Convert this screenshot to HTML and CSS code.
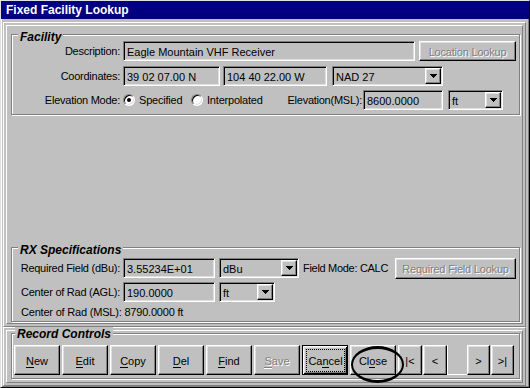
FILE: index.html
```html
<!DOCTYPE html>
<html>
<head>
<meta charset="utf-8">
<title>Fixed Facility Lookup</title>
<link rel="stylesheet" href="styles.css">
</head>
<body>
<div class="window">
  <div class="titlebar">Fixed Facility Lookup</div>
  <div class="client">
    <div class="panel upper">
      <div class="panel-inner">
        <div class="group facility">
          <div class="legend">Facility</div>
          <div class="row">
            <span class="label">Description:</span>
            <div class="field f-desc">Eagle Mountain VHF Receiver</div>
            <div class="btn disabled b-loc">Location Lookup</div>
          </div>
          <div class="row row-gap5">
            <span class="label">Coordinates:</span>
            <div class="field f-lat">39 02 07.00 N</div>
            <div class="field f-lon">104 40 22.00 W</div>
            <div class="select s-datum"><span class="sel-text">NAD 27</span><span class="btn drop"><svg width="7" height="4" viewBox="0 0 7 4" shape-rendering="crispEdges"><path d="M0 0h7v1H0zM1 1h5v1H1zM2 2h3v1H2zM3 3h1v1H3z" fill="#000"/></svg></span></div>
          </div>
          <div class="row row-gap4">
            <span class="label">Elevation Mode:</span>
            <span class="radio checked r1"></span><span class="rlabel rl1">Specified</span>
            <span class="radio r2"></span><span class="rlabel rl2">Interpolated</span>
            <span class="label label2">Elevation(MSL):</span>
            <div class="field f-elev">8600.0000</div>
            <div class="select s-ft1"><span class="sel-text">ft</span><span class="btn drop"><svg width="7" height="4" viewBox="0 0 7 4" shape-rendering="crispEdges"><path d="M0 0h7v1H0zM1 1h5v1H1zM2 2h3v1H2zM3 3h1v1H3z" fill="#000"/></svg></span></div>
          </div>
        </div>

        <div class="group rx">
          <div class="legend">RX Specifications</div>
          <div class="row">
            <span class="label">Required Field (dBu):</span>
            <div class="field f-num">3.55234E+01</div>
            <div class="select s-dbu"><span class="sel-text">dBu</span><span class="btn drop"><svg width="7" height="4" viewBox="0 0 7 4" shape-rendering="crispEdges"><path d="M0 0h7v1H0zM1 1h5v1H1zM2 2h3v1H2zM3 3h1v1H3z" fill="#000"/></svg></span></div>
            <span class="plain mode">Field Mode: CALC</span>
            <div class="btn disabled b-req">Required Field Lookup</div>
          </div>
          <div class="row row-gap4">
            <span class="label">Center of Rad (AGL):</span>
            <div class="field f-num">190.0000</div>
            <div class="select s-ft2"><span class="sel-text">ft</span><span class="btn drop"><svg width="7" height="4" viewBox="0 0 7 4" shape-rendering="crispEdges"><path d="M0 0h7v1H0zM1 1h5v1H1zM2 2h3v1H2zM3 3h1v1H3z" fill="#000"/></svg></span></div>
          </div>
          <div class="msl">Center of Rad (MSL): 8790.0000 ft</div>
        </div>
      </div>
    </div>

    <div class="panel lower">
      <div class="panel-inner">
        <div class="group record">
          <div class="legend">Record Controls</div>
          <div class="btnrow">
            <div class="btn rbtn"><span><u>N</u>ew</span></div>
            <div class="btn rbtn"><span><u>E</u>dit</span></div>
            <div class="btn rbtn"><span><u>C</u>opy</span></div>
            <div class="btn rbtn"><span><u>D</u>el</span></div>
            <div class="btn rbtn"><span><u>F</u>ind</span></div>
            <div class="btn rbtn disabled"><span><u>S</u>ave</span></div>
            <div class="btn rbtn default"><span class="focus"><span>Ca<u>n</u>cel</span></span></div>
            <div class="btn rbtn circled"><span>Cl<u>o</u>se</span></div>
            <div class="btn nav n1"><span>|&lt;</span></div>
            <div class="btn nav n2"><span>&lt;</span></div>
            <div class="navgap"></div>
            <div class="btn nav n3"><span>&gt;</span></div>
            <div class="btn nav n4"><span>&gt;|</span></div>
          </div>
        </div>
      </div>
    </div>
  </div>
</div>
</body>
</html>
```

FILE: styles.css
```css
* { box-sizing: border-box; }
html, body { margin: 0; padding: 0; }
body {
  width: 530px;
  height: 388px;
  overflow: hidden;
  background: #c0c0c0;
  font-family: "Liberation Sans", Arial, sans-serif;
  font-size: 11px;
  color: #000;
}
.window {
  width: 530px;
  height: 388px;
  border: 1px solid;
  border-color: #dfdfdf #000 #000 #dfdfdf;
  box-shadow: inset 1px 1px #fff, inset -1px -1px #808080;
  background: #c0c0c0;
  display: flex;
  flex-direction: column;
}
.titlebar {
  height: 18px;
  flex: none;
  background: #000080;
  color: #fff;
  font-weight: bold;
  font-size: 12px;
  line-height: 15px;
  padding: 2px 0 0 5px;
  white-space: nowrap;
}
.client {
  flex: 1;
  padding: 3px 3px 1px 2px;
  display: flex;
  flex-direction: column;
}
.panel {
  border: 1px solid;
  border-color: #fff #808080 #808080 #fff;
  padding: 2px;
  display: flex;
  flex-direction: column;
  flex: none;
}
.upper { height: 305px; }
.lower { height: 59px; }
.panel-inner {
  flex: 1;
  border: 1px solid;
  border-color: #fff #808080 #808080 #fff;
  display: flex;
  flex-direction: column;
}
.group {
  border: 1px solid #808080;
  box-shadow: inset 1px 1px #fff, 1px 1px #fff;
  margin: 0 2px 0 4px;
  display: flex;
  flex-direction: column;
}
.legend {
  align-self: flex-start;
  background: #c0c0c0;
  font-weight: bold;
  font-style: italic;
  font-size: 12px;
  line-height: 14px;
  padding: 0 2px;
  margin: -5px 0 -3px 6px;
  white-space: nowrap;
}
.facility { margin-top: 8px; padding: 0 3px 4px 0; }
.rx { margin-top: auto; margin-bottom: 1px; padding: 0 3px 2px 0; }
.rx .legend { margin-bottom: 1px; }
.record { margin-top: 2px; padding: 0 0 3px 2px; }
.record .legend { margin: -7px 0 4px 1px; }

.row {
  display: flex;
  align-items: flex-start;
  height: 20px;
}
.row-gap5 { margin-top: 5px; }
.row-gap4 { margin-top: 4px; }
.label {
  width: 108px;
  flex: none;
  text-align: right;
  padding-top: 2px;
  line-height: 17px;
  white-space: nowrap;
  letter-spacing: -0.25px;
}
.plain {
  padding-top: 2px;
  line-height: 17px;
  white-space: nowrap;
  letter-spacing: -0.3px;
}
.field {
  height: 20px;
  flex: none;
  border: 1px solid;
  border-color: #808080 #fff #fff #808080;
  box-shadow: inset 1px 1px #000, inset -1px -1px #dfdfdf;
  padding: 2px 3px 0;
  line-height: 16px;
  white-space: nowrap;
  overflow: hidden;
  margin-left: 3px;
}
.f-desc { width: 292px; }
.f-lat { width: 97px; }
.f-lon { width: 104px; }
.f-elev { width: 80px; margin-left: 1px; }
.f-num { width: 92px; }

.select {
  height: 20px;
  flex: none;
  display: flex;
  border: 1px solid;
  border-color: #808080 #fff #fff #808080;
  box-shadow: inset 1px 1px #000, inset -1px -1px #dfdfdf;
  padding: 1px;
}
.sel-text {
  flex: 1;
  padding: 1px 0 0 2px;
  line-height: 16px;
  white-space: nowrap;
}
.s-datum { width: 111px; margin-left: 5px; }
.s-ft1 { width: 55px; margin-left: 5px; }
.s-dbu { width: 80px; margin-left: 4px; }
.s-ft2 { width: 56px; margin-left: 4px; }

.btn {
  border: 1px solid;
  border-color: #fff #000 #000 #fff;
  box-shadow: inset -1px -1px #808080, inset 1px 1px #dfdfdf;
  background: #c0c0c0;
  display: flex;
  align-items: center;
  justify-content: center;
  white-space: nowrap;
  flex: none;
}
.drop { width: 16px; height: 16px; }
.disabled { color: #808080; text-shadow: 1px 1px 0 #fff; }
.b-loc { width: 97px; height: 20px; margin-left: 4px; padding-top: 1px; letter-spacing: -0.2px; }
.b-req { width: 121px; height: 21px; margin-left: auto; padding-top: 1px; letter-spacing: -0.2px; }
.mode { margin-left: 4px; }

.radio {
  width: 12px;
  height: 12px;
  flex: none;
  margin-top: 4px;
  border-radius: 50%;
  border: 1px solid;
  border-color: #808080 #fff #fff #808080;
  box-shadow: inset 1px 1px #000, inset -1px -1px #dfdfdf;
  background: #fff;
  display: flex;
  align-items: center;
  justify-content: center;
}
.radio.checked::after {
  content: "";
  width: 4px;
  height: 4px;
  border-radius: 50%;
  background: #000;
}
.r1 { margin-left: 3px; }
.rlabel {
  flex: none;
  padding-top: 2px;
  line-height: 17px;
  white-space: nowrap;
  margin-left: 4px;
  letter-spacing: -0.2px;
}
.rl1 { width: 52px; }
.rl2 { width: 57px; }
.label2 { width: 98px; }

.msl {
  margin-top: 3px;
  padding-left: 9px;
  line-height: 14px;
  white-space: nowrap;
  letter-spacing: -0.2px;
}

.btnrow {
  display: flex;
  align-items: stretch;
  height: 30px;
}
.rbtn { width: 46px; height: 30px; margin-left: 2px; padding-top: 2px; }
.rbtn:first-child { margin-left: 0; }
.nav { width: 24px; height: 30px; padding-top: 2px; }
u {
  text-decoration: none;
  border-bottom: 1px solid currentColor;
}
.disabled u { border-bottom-color: #808080; box-shadow: 0 1px 0 #fff; }
.default {
  border-color: #000;
  box-shadow: inset 1px 1px #fff, inset -1px -1px #000, inset 2px 2px #dfdfdf, inset -2px -2px #808080;
  padding: 3px 2px 2px 3px;
  align-items: stretch;
}
.focus {
  flex: 1;
  border: 1px dotted #000;
  display: flex;
  align-items: center;
  justify-content: center;
  padding-top: 1px;
}
.circled { position: relative; }
.circled::after {
  content: "";
  position: absolute;
  left: 0;
  top: 0;
  width: 49px;
  height: 31px;
  border: 2px solid #000;
  border-width: 3px 2px;
  border-radius: 50%;
}
.n1 { margin-left: 2px; }
.n2 { margin-left: 1px; }
.navgap {
  width: 20px;
  flex: none;
  border-left: 1px solid #fff;
  border-bottom: 1px solid #fff;
}
.n3 { width: 23px; }
.n4 { width: 23px; margin-left: 1px; }
```
